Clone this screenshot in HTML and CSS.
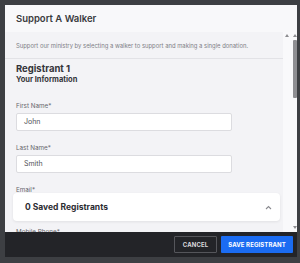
FILE: index.html
```html
<!DOCTYPE html>
<html>
<head>
<meta charset="utf-8">
<link rel="stylesheet" href="styles.css">
</head>
<body>
<div class="modal">
  <div class="header"><span class="title">Support A Walker</span></div>
  <div class="main">
    <div class="content">
      <p class="desc">Support our ministry by selecting a walker to support and making a single donation.</p>
      <div class="sep"></div>
      <div class="form">
        <div class="reg">Registrant 1</div>
        <div class="info">Your Information</div>
        <label class="lbl first">First Name*</label>
        <div class="input">John</div>
        <label class="lbl">Last Name*</label>
        <div class="input">Smith</div>
        <label class="lbl">Email*</label>
        <div class="input"></div>
        <label class="lbl">Mobile Phone*</label>
      </div>
    </div>
    <div class="track">
      <span class="arrow up inner"></span>
    </div>
    <div class="bar">
      <span class="arrow up"></span>
      <span class="thumb"></span>
      <span class="spacer"></span>
      <span class="arrow down"></span>
    </div>
    <div class="saved">
      <span class="saved-text">0 Saved Registrants</span>
      <svg class="chev" width="7" height="5" viewBox="0 0 7 5"><path d="M1 4 L3.5 1.5 L6 4" fill="none" stroke="#8a8a8f" stroke-width="1.1"/></svg>
    </div>
  </div>
  <div class="footer">
    <button class="btn cancel">CANCEL</button>
    <button class="btn save">SAVE REGISTRANT</button>
  </div>
</div>
</body>
</html>
```

FILE: styles.css
```css
html, body {
  margin: 0;
  padding: 0;
}
body {
  background: #3d3f43;
  width: 300px;
  height: 263px;
  overflow: hidden;
  font-family: "Inter", "Open Sans", sans-serif;
}
.modal {
  margin: 5px 0 0 5px;
  width: 292px;
  height: 252px;
  display: flex;
  flex-direction: column;
  background: #f3f3f6;
  overflow: hidden;
}
.header {
  height: 27px;
  flex: none;
  background: #f8f8fa;
  display: flex;
  align-items: center;
  padding-left: 11px;
}
.title {
  font-size: 9.5px;
  font-weight: 600;
  color: #3a3a3e;
}
.main {
  flex: 1;
  display: flex;
  position: relative;
  min-height: 0;
}
.content {
  width: 278px;
  flex: none;
  overflow: hidden;
}
.desc {
  margin: 0;
  padding: 10px 0 0 11px;
  height: 16px;
  font-size: 5.9px;
  line-height: 8px;
  color: #808086;
  white-space: nowrap;
}
.sep {
  height: 1px;
  background: #e2e2e6;
}
.form {
  padding: 4px 0 0 11px;
  display: flex;
  flex-direction: column;
  align-items: flex-start;
}
.reg {
  font-size: 9.5px;
  line-height: 12px;
  font-weight: 700;
  color: #34343a;
}
.info {
  font-size: 7.5px;
  line-height: 9px;
  font-weight: 700;
  color: #34343a;
  margin-top: 0;
}
.lbl {
  font-size: 6.3px;
  line-height: 8px;
  color: #66666c;
  margin-top: 13px;
}
.lbl.first {
  margin-top: 18px;
}
.input {
  margin-top: 3px;
  width: 207px;
  height: 16px;
  background: #fff;
  border: 1px solid #dcdce0;
  border-radius: 2px;
  font-size: 7px;
  line-height: 16px;
  padding-left: 7px;
  color: #505056;
  box-sizing: content-box;
}
.track {
  width: 9px;
  flex: none;
  background: #f9f9fb;
  position: relative;
}
.bar {
  width: 5px;
  flex: none;
  display: flex;
  flex-direction: column;
  align-items: center;
  background: #f9f9fb;
}
.arrow {
  width: 0;
  height: 0;
  border-left: 2px solid transparent;
  border-right: 2px solid transparent;
}
.arrow.up {
  border-bottom: 3px solid #8c8c90;
  margin-top: 2px;
}
.arrow.up.inner {
  display: block;
  margin: 2px 0 0 2px;
}
.arrow.down {
  border-top: 3px solid #8c8c90;
  margin-bottom: 3px;
}
.thumb {
  margin-top: 3px;
  width: 4px;
  height: 58px;
  background: #8e8e92;
  border-radius: 1px;
}
.spacer {
  flex: 1;
}
.saved {
  position: absolute;
  left: 8px;
  top: 161px;
  width: 267px;
  height: 28px;
  background: #fff;
  border-radius: 4px;
  box-shadow: 0 1px 3px rgba(0,0,0,0.08);
  display: flex;
  align-items: center;
  justify-content: space-between;
  padding: 0 8px 0 12px;
  box-sizing: border-box;
}
.saved-text {
  font-size: 8.5px;
  font-weight: 700;
  color: #2c2c32;
}
.footer {
  height: 25px;
  flex: none;
  background: #232428;
  display: flex;
  justify-content: flex-end;
  align-items: center;
  gap: 4px;
  padding-right: 4px;
}
.btn {
  height: 17px;
  font-family: "Inter", "Open Sans", sans-serif;
  font-size: 6px;
  font-weight: 700;
  letter-spacing: 0.1px;
  padding: 0;
  border-radius: 1px;
  color: #fff;
}
.cancel {
  width: 43px;
  background: #232428;
  border: 1px solid #55565b;
  color: #d8d8dc;
}
.save {
  width: 72px;
  background: #1b6cf2;
  border: none;
}
```
